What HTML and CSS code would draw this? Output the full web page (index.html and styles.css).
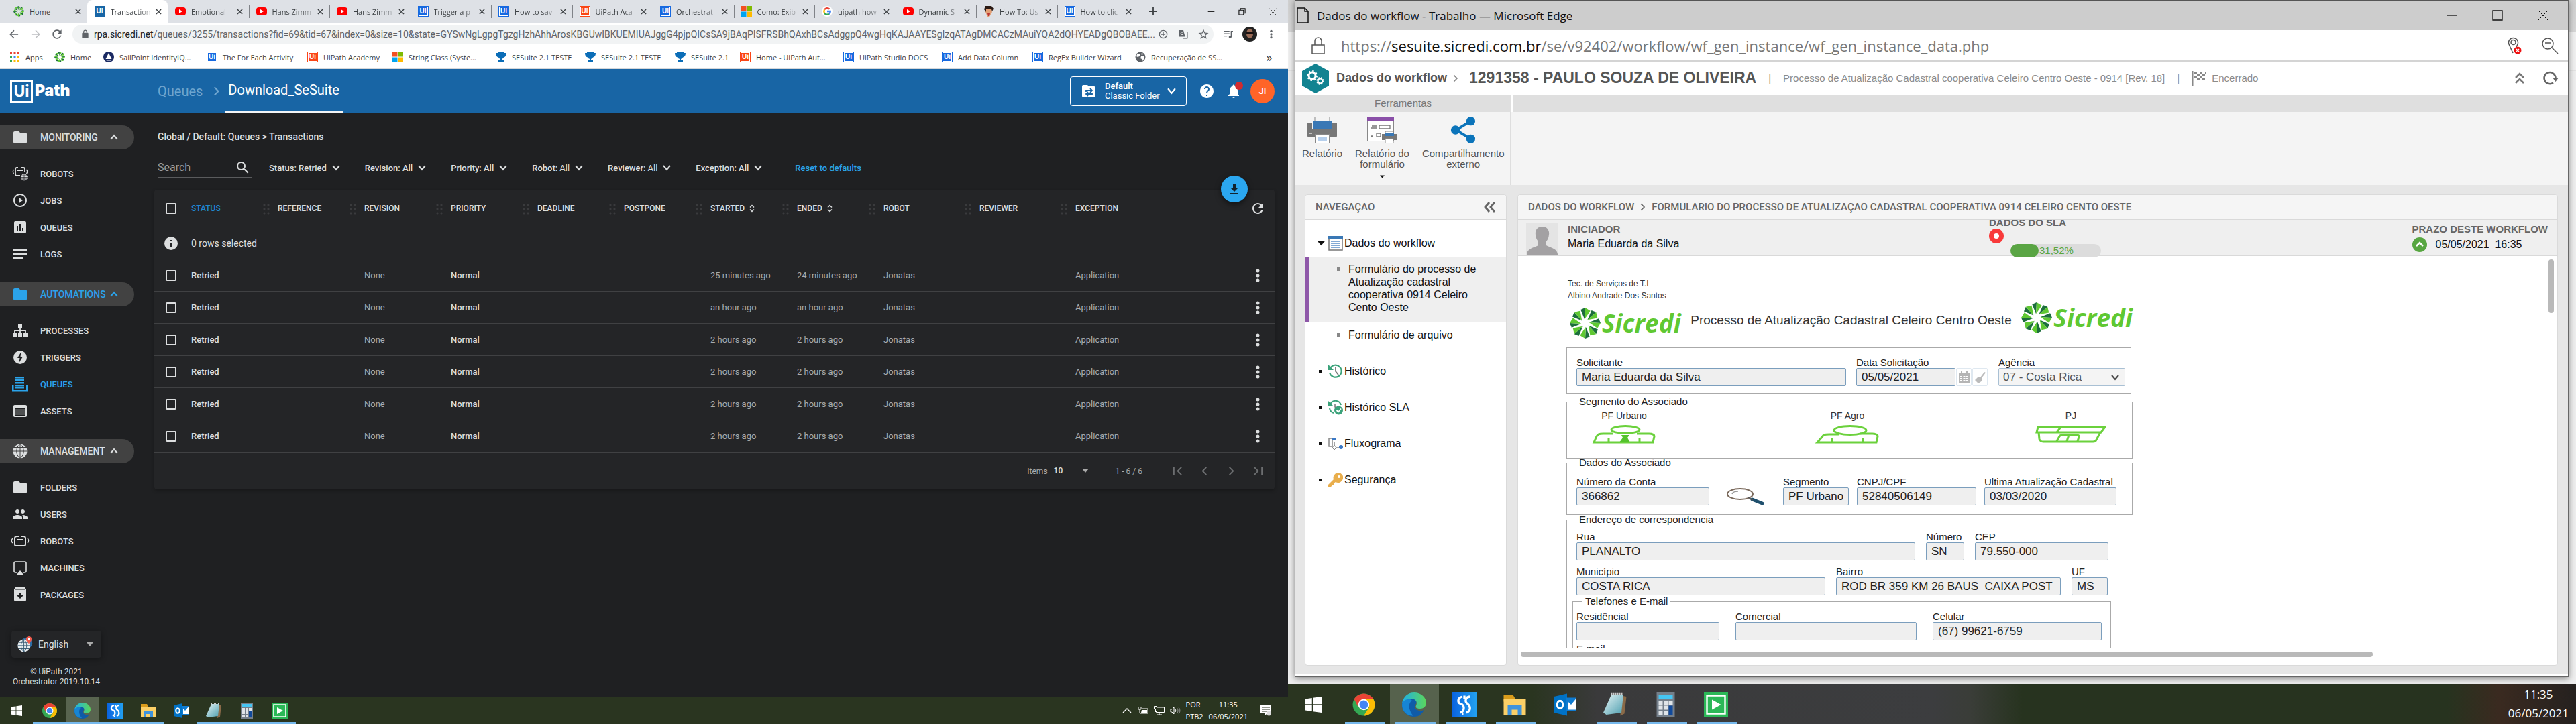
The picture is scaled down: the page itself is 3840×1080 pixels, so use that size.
FILE: index.html
```html
<!DOCTYPE html>
<html lang="pt-BR">
<head>
<meta charset="utf-8">
<title>Transactions</title>
<link rel="stylesheet" href="styles.css">
</head>
<body>
<svg class="sprite" aria-hidden="true">
  <defs>
    <linearGradient id="edgeG" x1="0" y1="0" x2="1" y2="0"><stop offset="0" stop-color="#1fb0e6"/><stop offset="1" stop-color="#5bd65b"/></linearGradient>
    <linearGradient id="sG" x1="0" y1="0" x2="1" y2="0"><stop offset="0" stop-color="#0a64e0"/><stop offset="1" stop-color="#22a0f0"/></linearGradient>
    <linearGradient id="noteG" x1="0" y1="0" x2="1" y2="1"><stop offset="0" stop-color="#e6f4f5"/><stop offset="1" stop-color="#4e9fb0"/></linearGradient>
  </defs>
  <symbol id="pin" viewBox="0 0 48 48">
    <g id="bl"><path fill="#1c6e3c" d="M23 18 17 3l7-3z"/><path fill="#5fc832" d="M23 18 24 0l8 5z"/></g>
    <use href="#bl" transform="rotate(45 24 24)"/><use href="#bl" transform="rotate(90 24 24)"/><use href="#bl" transform="rotate(135 24 24)"/><use href="#bl" transform="rotate(180 24 24)"/><use href="#bl" transform="rotate(225 24 24)"/><use href="#bl" transform="rotate(270 24 24)"/><use href="#bl" transform="rotate(315 24 24)"/>
  </symbol>
  <symbol id="yt" viewBox="0 0 16 16"><rect x="0" y="2" width="16" height="12" rx="4" fill="#f00"/><path fill="#fff" d="M6 5v6l5-3z"/></symbol>
  <symbol id="ms" viewBox="0 0 16 16"><path fill="#f25022" d="M0 0h7.500v7.500H0z"/><path fill="#7fba00" d="M8.500 0H16v7.500H8.500z"/><path fill="#00a4ef" d="M0 8.500h7.500V16H0z"/><path fill="#ffb900" d="M8.500 8.500H16V16H8.500z"/></symbol>
  <symbol id="goog" viewBox="0 0 16 16"><circle cx="8" cy="8" r="8" fill="#fff"/><g fill="none" stroke-width="2.400"><path stroke="#ea4335" d="M4 5.500A4.800 4.800 0 0 1 11.500 4.600"/><path stroke="#fbbc05" d="M4 5.500a5 5 0 0 0 0 5"/><path stroke="#34a853" d="M4 10.500a4.800 4.800 0 0 0 7 1.200"/><path stroke="#4285f4" d="M11 11.700A4.800 4.800 0 0 0 12.800 8H8"/></g></symbol>
  <symbol id="face" viewBox="0 0 16 16"><path fill="#e2a077" d="M3 3h9l1 6-4 7H6L3 9z"/><path fill="#2a1a14" d="M1 5 3 0h9l3 4-2 4-1-3H4v4z"/><path fill="#b33" d="M6 11h4l-1 4H7z"/></symbol>
  <symbol id="trophy" viewBox="0 0 16 16"><path fill="#0b6db7" d="M3 1h10v1h3c0 4-1.500 6-4 6.500C11 10 10 10.500 9 11v2h3v2H4v-2h3v-2c-1-.5-2-1-3-2.500C1.500 8 0 6 0 2h3z"/></symbol>
  <symbol id="sail" viewBox="0 0 16 16"><circle cx="8" cy="8" r="8" fill="#1b2a63"/><path fill="#fff" d="M8 2v9H3.500zM9 4l3.500 7H9zM3 12h10l-2 1.500H5z"/></symbol>
  <symbol id="globe" viewBox="0 0 24 24"><circle cx="12" cy="12" r="10.500" fill="currentColor"/><path fill="none" class="cut" stroke-width="1" d="M12 1v22M1 12h22M3 6.500h18M3 17.500h18M12 1.500c-7 5-7 16 0 21M12 1.500c7 5 7 16 0 21"/></symbol>
  <symbol id="world" viewBox="0 0 16 16"><circle cx="8" cy="8" r="7.500" fill="#5f6368"/><path fill="#fff" d="M3 4c2-1 4-1 5 0L6.500 7 4 8 2 7zM9 7h4l1 3-3 4-1-3-2-1zM10 2l2 1-1 2-2-1z"/></symbol>
  <symbol id="apps" viewBox="0 0 16 16"><path fill="#ea4335" d="M1 1h3v3H1zM6.500 1h3v3h-3zM12 1h3v3h-3z"/><path fill="#34a853" d="M1 6.500h3v3H1zM1 12h3v3H1z"/><path fill="#4285f4" d="M6.500 6.500h3v3h-3z"/><path fill="#fbbc05" d="M12 6.500h3v3h-3zM6.500 12h3v3h-3zM12 12h3v3h-3z"/></symbol>
  <symbol id="x" viewBox="0 0 10 10"><path fill="none" stroke="currentColor" stroke-width="1.600" d="m1 1 8 8M9 1 1 9"/></symbol>
  <symbol id="xthin" viewBox="0 0 16 16"><path fill="none" stroke="currentColor" d="m1 1 14 14M15 1 1 15"/></symbol>
  <symbol id="plus" viewBox="0 0 12 12"><path fill="none" stroke="currentColor" stroke-width="1.800" d="M6 0v12M0 6h12"/></symbol>
  <symbol id="min" viewBox="0 0 16 16"><path stroke="currentColor" stroke-width="1.300" d="M1 8h14"/></symbol>
  <symbol id="max" viewBox="0 0 16 16"><path fill="none" stroke="currentColor" stroke-width="1.300" d="M1 1h14v14H1z"/></symbol>
  <symbol id="restore" viewBox="0 0 12 12"><path fill="none" stroke="currentColor" stroke-width="1.200" d="M1 3.500h7.500V11H1zM3.500 3.500V1H11v7.500H8.500"/></symbol>
  <symbol id="back" viewBox="0 0 16 16"><path fill="none" stroke="currentColor" stroke-width="1.800" d="M15 8H2M8 1.500 1.500 8 8 14.500"/></symbol>
  <symbol id="fwd" viewBox="0 0 16 16"><path fill="none" stroke="currentColor" stroke-width="1.800" d="M1 8h13M8 1.500 14.500 8 8 14.500"/></symbol>
  <symbol id="refresh" viewBox="0 0 24 24"><path fill="currentColor" d="M17.650 6.350C16.200 4.900 14.210 4 12 4c-4.420 0-7.990 3.580-7.990 8s3.570 8 7.990 8c3.730 0 6.840-2.550 7.730-6h-2.080c-.82 2.330-3.040 4-5.650 4-3.310 0-6-2.690-6-6s2.690-6 6-6c1.660 0 3.140.69 4.220 1.780L13 11h7V4l-2.350 2.350z"/></symbol>
  <symbol id="lock" viewBox="0 0 24 24"><path fill="currentColor" d="M18 8h-1V6c0-2.760-2.240-5-5-5S7 3.240 7 6v2H6c-1.100 0-2 .9-2 2v10c0 1.100.9 2 2 2h12c1.100 0 2-.9 2-2V10c0-1.100-.9-2-2-2zM9 6c0-1.660 1.340-3 3-3s3 1.340 3 3v2H9V6z"/></symbol>
  <symbol id="pluscirc" viewBox="0 0 16 16"><circle cx="8" cy="8" r="6.500" fill="none" stroke="currentColor" stroke-width="1.500"/><path stroke="currentColor" stroke-width="1.500" d="M8 4.500v7M4.500 8h7"/></symbol>
  <symbol id="trans" viewBox="0 0 16 16"><path fill="currentColor" d="M1 1h7l3 11H2a1 1 0 0 1-1-1z"/><path fill="none" stroke="currentColor" d="M9 4h6v11H8"/><path fill="none" stroke="#fff" d="M7 5a2 2 0 1 0 0 3H5.500M10 7h4M12 7c0 2-1 3-2 4"/></symbol>
  <symbol id="star" viewBox="0 0 24 24"><path fill="currentColor" d="M22 9.240l-7.190-.62L12 2 9.190 8.630 2 9.240l5.460 4.730L5.820 21 12 17.270 18.180 21l-1.630-7.030L22 9.240zM12 15.400l-3.760 2.270 1-4.280-3.320-2.880 4.380-.38L12 6.100l1.710 4.040 4.380.38-3.320 2.880 1 4.280L12 15.400z"/></symbol>
  <symbol id="queuem" viewBox="0 0 16 16"><path fill="none" stroke="currentColor" stroke-width="1.600" d="M0 3h10M0 7h10M0 11h6M13 13V3h3"/><circle cx="11" cy="12.500" r="2.200" fill="currentColor"/></symbol>
  <symbol id="dots" viewBox="0 0 6 20"><circle cx="3" cy="3" r="2.500" fill="currentColor"/><circle cx="3" cy="10" r="2.500" fill="currentColor"/><circle cx="3" cy="17" r="2.500" fill="currentColor"/></symbol>
  <symbol id="cd" viewBox="0 0 12 12"><path fill="none" stroke="currentColor" stroke-width="2" d="m1 3 5 6 5-6"/></symbol>
  <symbol id="cu" viewBox="0 0 12 12"><path fill="none" stroke="currentColor" stroke-width="2" d="m1 9 5-6 5 6"/></symbol>
  <symbol id="cr" viewBox="0 0 12 16"><path fill="none" stroke="currentColor" stroke-width="2.500" d="m2 1 7 7-7 7"/></symbol>
  <symbol id="car" viewBox="0 0 10 6"><path fill="currentColor" d="M0 0h10L5 6z"/></symbol>
  <symbol id="folder" viewBox="0 0 24 24"><path fill="currentColor" d="M10 3H4C2.900 3 2 3.900 2 5v14c0 1.100.9 2 2 2h16c1.100 0 2-.9 2-2V7c0-1.100-.9-2-2-2h-8l-2-2z"/></symbol>
  <symbol id="fswap" viewBox="0 0 24 24"><path fill="#fff" d="M10 3H4C2.900 3 2 3.900 2 5v14c0 1.100.9 2 2 2h16c1.100 0 2-.9 2-2V7c0-1.100-.9-2-2-2h-8l-2-2z"/><path fill="none" stroke="#1865a5" stroke-width="1.800" d="M8 13v-2h8m-2-3 3 3-3 3M17 14v2H9m2-3-3 3 3 3"/></symbol>
  <symbol id="help" viewBox="0 0 24 24"><path fill="currentColor" d="M12 2C6.480 2 2 6.480 2 12s4.480 10 10 10 10-4.480 10-10S17.520 2 12 2zm1 17h-2v-2h2v2zm2.070-7.750l-.9.92C13.450 12.900 13 13.500 13 15h-2v-.5c0-1.100.45-2.100 1.170-2.830l1.240-1.260c.37-.36.59-.86.59-1.410 0-1.100-.9-2-2-2s-2 .9-2 2H8c0-2.210 1.790-4 4-4s4 1.790 4 4c0 .88-.36 1.680-.93 2.250z"/></symbol>
  <symbol id="bell" viewBox="0 0 24 24"><path fill="currentColor" d="M12 22c1.100 0 2-.9 2-2h-4c0 1.100.89 2 2 2zm6-6v-5c0-3.070-1.640-5.640-4.500-6.320V4c0-.83-.67-1.500-1.500-1.500s-1.500.67-1.500 1.500v.68C7.630 5.360 6 7.920 6 11v5l-2 2v1h16v-1l-2-2z"/></symbol>
  <symbol id="bot" viewBox="0 0 28 20"><g fill="none" stroke="currentColor" stroke-width="2"><path d="M11 3H9a3 3 0 0 0-3 3v9a2 2 0 0 0 2 2h12a2 2 0 0 0 2-2V6a3 3 0 0 0-3-3h-2M9.500 8h9M11 2v2M17 2v2"/><path d="M3 6c-2 2-2 5 0 7M25 6c2 2 2 5 0 7" stroke-width="1.500"/></g></symbol>
  <symbol id="botg" viewBox="0 0 24 24"><g fill="none" stroke="currentColor" stroke-width="1.800"><path d="M9 3H7a2 2 0 0 0-2 2v8a2 2 0 0 0 2 2h5M14 3h3a2 2 0 0 1 2 2v4M8 7h8"/><path d="M2.500 6c-1.500 2-1.500 4 0 6M21.500 6c1.500 2 1.500 4 0 6" stroke-width="1.300"/></g><circle cx="18" cy="17.500" r="5" fill="currentColor"/><path fill="none" stroke="#1f2022" stroke-width=".7" d="M18 12v11M13 17.500h10M14 15h8M14 20h8"/></symbol>
  <symbol id="jobs" viewBox="0 0 24 24"><path fill="currentColor" d="M10 16.500l6-4.500-6-4.500v9zM12 2C6.480 2 2 6.480 2 12s4.480 10 10 10 10-4.480 10-10S17.520 2 12 2zm0 18c-4.410 0-8-3.590-8-8s3.590-8 8-8 8 3.590 8 8-3.590 8-8 8z"/></symbol>
  <symbol id="assess" viewBox="0 0 24 24"><path fill="currentColor" d="M19 3H5c-1.100 0-2 .9-2 2v14c0 1.100.9 2 2 2h14c1.100 0 2-.9 2-2V5c0-1.100-.9-2-2-2zM9 17H7v-7h2v7zm4 0h-2V7h2v10zm4 0h-2v-4h2v4z"/></symbol>
  <symbol id="logs" viewBox="0 0 24 24"><path fill="currentColor" d="M2 5h20v2.500H2zM2 11h20v2.500H2zM2 17h14v2.500H2z"/></symbol>
  <symbol id="proc" viewBox="0 0 24 24"><path fill="currentColor" d="M9 2h6v6H9zM1 15h6v7H1zM9 15h6v7H9zM17 15h6v7h-6z"/><path fill="none" stroke="currentColor" stroke-width="1.800" d="M12 8v8M4 16v-4h16v4"/></symbol>
  <symbol id="trig" viewBox="0 0 24 24"><circle cx="12" cy="12" r="10" fill="currentColor"/><path fill="#1f2022" d="M13.500 4 8 13h3.500L10.500 20 16 11h-3.500z"/></symbol>
  <symbol id="queue" viewBox="0 0 24 24"><path fill="currentColor" d="M5 1h13v2.500H5zM5 5h13v2.500H5zM5 9h13v2.500H5zM5 13h13v2.500H5zM5 16.500h13v2H5zM0 13h2.500v8H21v-8h2.500v10.500H0z"/></symbol>
  <symbol id="assets" viewBox="0 0 24 24"><path fill="currentColor" d="M4 3h16a2 2 0 0 1 2 2v14a2 2 0 0 1-2 2H4a2 2 0 0 1-2-2V5a2 2 0 0 1 2-2zm0 5v11h16V8z"/><path stroke="currentColor" stroke-width="1.500" stroke-dasharray="2 1 11 9" d="M5 10.500h14M5 13.500h14M5 16.500h14"/></symbol>
  <symbol id="people" viewBox="0 0 24 24"><path fill="currentColor" d="M16 11c1.660 0 2.990-1.340 2.990-3S17.660 5 16 5c-1.660 0-3 1.340-3 3s1.340 3 3 3zm-8 0c1.660 0 2.990-1.340 2.990-3S9.660 5 8 5C6.340 5 5 6.340 5 8s1.340 3 3 3zm0 2c-2.330 0-7 1.170-7 3.500V19h14v-2.500c0-2.330-4.670-3.500-7-3.500zm8 0c-.29 0-.62.02-.97.05 1.160.84 1.970 1.970 1.970 3.450V19h6v-2.500c0-2.330-4.670-3.500-7-3.500z"/></symbol>
  <symbol id="mach" viewBox="0 0 24 24"><path fill="none" stroke="currentColor" stroke-width="1.600" d="M8 19H5a2 2 0 0 1-2-2V5a2 2 0 0 1 2-2h14a2 2 0 0 1 2 2v12a2 2 0 0 1-2 2h-3"/><path fill="currentColor" d="M6 23h12l-6-7z"/></symbol>
  <symbol id="pack" viewBox="0 0 24 24"><path fill="currentColor" d="M5 1h14l2 3v16a2 2 0 0 1-2 2H5a2 2 0 0 1-2-2V4zm0 2-.5 1.500h15L19 3zm5.500 7v3H7l5 5 5-5h-3.500v-3z"/></symbol>
  <symbol id="lang" viewBox="0 0 24 28"><circle cx="15" cy="12" r="9" fill="#2d6da5"/><circle cx="10.500" cy="16" r="10" fill="#e6ecef"/><path fill="none" stroke="#33566f" stroke-width="1" d="M10.500 6v20M.5 16h20M2 11h17M2 21h17M10.500 6c-6 5-6 15 0 20M10.500 6c6 5 6 15 0 20"/><path fill="#ee5a4c" d="M18.500 1a4.500 4.500 0 0 1 4.500 5c0 3-4.500 7-4.500 7S14 9 14 6a4.500 4.500 0 0 1 4.500-5z"/><circle cx="18.500" cy="5.500" r="2" fill="#fff"/></symbol>
  <symbol id="search" viewBox="3 3 18 18"><path fill="currentColor" d="M15.500 14h-.79l-.28-.27C15.410 12.590 16 11.110 16 9.500 16 5.910 13.090 3 9.500 3S3 5.910 3 9.500 5.910 16 9.500 16c1.610 0 3.090-.59 4.230-1.570l.27.28v.79l5 4.990L20.490 19l-4.990-5zm-6 0C7.010 14 5 11.990 5 9.500S7.010 5 9.500 5 14 7.010 14 9.500 11.990 14 9.500 14z"/></symbol>
  <symbol id="info" viewBox="0 0 20 20"><circle cx="10" cy="10" r="10" fill="currentColor"/><path fill="#242527" d="M9 5h2v2H9zM9 9h2v6H9z"/></symbol>
  <symbol id="sort" viewBox="0 0 8 12"><path fill="none" stroke="currentColor" stroke-width="1.500" d="m1 4.500 3-3 3 3M1 7.500l3 3 3-3"/></symbol>
  <symbol id="dl" viewBox="0 0 16 18"><path fill="#12232e" d="M6 1h4v6h4l-6 6-6-6h4zM2 15h12v2H2z"/></symbol>
  <symbol id="pfirst" viewBox="0 0 16 16"><path fill="none" stroke="currentColor" stroke-width="2" d="M2 2v12M14 2 8 8l6 6"/></symbol>
  <symbol id="pprev" viewBox="0 0 16 16"><path fill="none" stroke="currentColor" stroke-width="2" d="M11 2 5 8l6 6"/></symbol>
  <symbol id="pnext" viewBox="0 0 16 16"><path fill="none" stroke="currentColor" stroke-width="2" d="m5 2 6 6-6 6"/></symbol>
  <symbol id="plast" viewBox="0 0 16 16"><path fill="none" stroke="currentColor" stroke-width="2" d="M14 2v12M2 2l6 6-6 6"/></symbol>
  <symbol id="win" viewBox="0 0 16 16"><path fill="#fff" d="M0 2.300 6.500 1.400v6.100H0zM7.400 1.200 16 0v7.500H7.400zM0 8.500h6.500v6.100L0 13.700zM7.400 8.500H16V16l-8.600-1.200z"/></symbol>
  <symbol id="chrome" viewBox="0 0 24 24"><circle cx="12" cy="12" r="11" fill="#34a853"/><path fill="#ea4335" d="M2.500 6.500A11 11 0 0 1 21.500 6.500H12l-5.500 8z"/><path fill="#fbbc05" d="M21.500 6.500A11 11 0 0 1 12 23l5.500-8.500L12 6.500z"/><circle cx="12" cy="12" r="5.500" fill="#fff"/><circle cx="12" cy="12" r="4.300" fill="#4285f4"/></symbol>
  <symbol id="edge" viewBox="0 0 24 24"><path fill="#0f5ba8" d="M0 12c0-6 5-9 9-8 5 1 6 5 5 7-2 2-2 6 3 7 2 .4 4 0 5-1-2 5-6 7-10 7C5 24 0 19 0 12z"/><path fill="#1785d3" d="M0 12C1 6 7 5 10 8c-4 2-4 9 1 15C4 23 0 18 0 12z"/><path fill="url(#edgeG)" d="M0 11C1 4 6 0 12 0c7 0 12 5 12 10 0 4-3 6-6 6-3 0-5-1-4-3 2-4-1-7-5-7-4 0-8 2-9 5z"/></symbol>
  <symbol id="ss" viewBox="0 0 24 24"><path fill="url(#sG)" d="M0 0h24v24H0z"/><path fill="none" stroke="#fff" stroke-width="2.200" d="M10 4C5 5 5 10 8 11c4 1 5 7 0 9M18 4c-5 0-6 5-3 7s4 7-1 9M12 3v3M10 21h1"/></symbol>
  <symbol id="expl" viewBox="0 0 24 24"><path fill="#d99c1c" d="M1 2h9l2 3v4H1z"/><path fill="#fbd067" d="M1 6h22v16H1z"/><path fill="#3f93dd" d="M5 12h14v10h-4v-5H9v5H5z"/></symbol>
  <symbol id="outl" viewBox="0 0 24 24"><path fill="#0072c6" d="M1 4 14 1v22L1 20z"/><path fill="#0f7bd0" d="M13 5h10v13H13z"/><path fill="#fff" d="m15 9 3 3 5-6v11h-8z"/><ellipse cx="7" cy="12" rx="2.800" ry="3.800" fill="none" stroke="#fff" stroke-width="2"/></symbol>
  <symbol id="note" viewBox="0 0 24 24"><path fill="#8a6a48" d="m18 3 5 1-2 17-4 2z"/><path fill="url(#noteG)" d="M8 2h12l-2 18-15 2-3-2z"/><path stroke="#ccc" stroke-width="2" stroke-dasharray="1 1" d="M8 1.500h12"/></symbol>
  <symbol id="calc" viewBox="0 0 24 24"><path fill="#747f8a" d="M3 0h18v24H3z"/><path fill="#45c6f3" d="M5 2h14v4H5z"/><path fill="#dfe4e8" d="M5 8h4v4H5zM10 8h4v4h-4zM15 8h4v4h-4zM5 13h4v4H5zM10 13h4v4h-4zM5 18h4v4H5zM10 18h4v4h-4z"/><path fill="#114a9c" d="M15 13h4v9h-4z"/></symbol>
  <symbol id="play" viewBox="0 0 24 24"><path fill="#2bb857" d="M0 0h24v24H0z"/><path fill="none" stroke="#fff" stroke-width="1.600" d="M3 3h18v18H3z"/><path fill="#fff" d="m8 7 9 5-9 5z"/></symbol>
  <symbol id="tup" viewBox="0 0 14 14"><path fill="none" stroke="#fff" stroke-width="1.300" d="m1 10 6-6 6 6"/></symbol>
  <symbol id="bat" viewBox="0 0 16 12"><path fill="none" stroke="#fff" d="M6 3h9v7H3V8M1 1v3h4V1M3 4v4"/><path fill="#fff" d="M6 5h8v4H5z"/></symbol>
  <symbol id="net" viewBox="0 0 16 14"><path fill="none" stroke="#fff" d="M5 2h10.500v7.500H3.500V7M8 10v3M5 13h7M.5.500h4v4h-4zM2.500 4.500V9"/></symbol>
  <symbol id="snd" viewBox="0 0 16 12"><path fill="none" stroke="#fff" d="M1 4h2l3-3v10L3 8H1zM8 4c1 1 1 3 0 4"/><path fill="none" stroke="#999" d="M10.500 2c2 2 2 6 0 8M13 1c2.500 3 2.500 7 0 10"/></symbol>
  <symbol id="notif" viewBox="0 0 16 16"><path fill="#fff" d="M0 0h16v12h-6l-3 3v-3H0z"/><path stroke="#2a3520" d="M2 3h12M2 6h12M2 9h7"/><circle cx="12.500" cy="12" r="3.500" fill="#ddd"/></symbol>
  <symbol id="page" viewBox="0 0 18 24"><path fill="none" stroke="#111" stroke-width="1.500" d="M1 1h11l5 5v17H1zM12 1v5h5"/></symbol>
  <symbol id="lockt" viewBox="0 0 20 26"><path fill="none" stroke="#555" stroke-width="1.500" d="M1 12h18v13H1zM5 12V6a5 5 0 0 1 10 0v6"/></symbol>
  <symbol id="loc" viewBox="0 0 22 26"><path fill="none" stroke="#555" stroke-width="1.500" d="M8 24 2 11a7 7 0 1 1 13 0l-2 4"/><circle cx="8.500" cy="8" r="3.500" fill="none" stroke="#555" stroke-width="1.500"/><circle cx="15" cy="20" r="5.500" fill="#e11"/><path stroke="#fff" stroke-width="1.500" d="m13 18 4 4M17 18l-4 4"/></symbol>
  <symbol id="zout" viewBox="0 0 26 26"><circle cx="10" cy="10" r="8" fill="none" stroke="#555" stroke-width="1.500"/><path stroke="#555" stroke-width="1.500" d="M6 9h8M16 16l9 9"/></symbol>
  <symbol id="hex" viewBox="0 0 40 44"><path fill="#128391" d="M20 0 40 11v22L20 44 0 33V11z"/><g fill="none" stroke="#fff"><circle cx="15" cy="18" r="5" stroke-width="3"/><circle cx="15" cy="18" r="7" stroke-width="2" stroke-dasharray="2.500 3"/><circle cx="27" cy="26" r="3.500" stroke-width="2.200"/><circle cx="27" cy="26" r="5" stroke-width="1.500" stroke-dasharray="2 2"/></g></symbol>
  <symbol id="flag" viewBox="0 0 22 22"><path fill="#888" d="M1 0h1.500v22H1zM4 1h4v3H4zM12 1h4v3h-4zM8 4h4v3H8zM16 4h4v3h-4zM4 7h4v3H4zM12 7h4v3h-4zM8 10h4v3H8zM16 10h4v3h-4zM20 1h1v3h-1z"/></symbol>
  <symbol id="uu" viewBox="0 0 14 18"><path fill="none" stroke="#777" stroke-width="2.500" d="m1 8 6-6 6 6M1 16l6-6 6 6"/></symbol>
  <symbol id="ll" viewBox="0 0 18 16"><path fill="none" stroke="#666" stroke-width="2.800" d="M8 1 2 8l6 7M16 1l-6 7 6 7"/></symbol>
  <symbol id="rel" viewBox="0 0 24 22"><path fill="none" stroke="#666" stroke-width="2.500" d="M16 17.500A8.500 8.500 0 1 1 19.500 11"/><path fill="#666" d="M15 10h9l-4.500 6z"/></symbol>
  <symbol id="printer" viewBox="0 0 44 40"><path fill="#f4f4f4" stroke="#888" d="M11 .5h22V14H11z"/><path fill="#777" d="M0 9h7v10h30V9h7v20a2 2 0 0 1-2 2H2a2 2 0 0 1-2-2z"/><path fill="#3a78b5" d="M8 7h28v12H8z"/><path fill="#fff" stroke="#888" d="M11.500 26.500h21v13h-21z"/><path stroke="#9fc0e6" stroke-width="1.500" d="M16 32h13M16 35h13"/><path stroke="#ddd" stroke-width="1.500" d="M3 25h4"/></symbol>
  <symbol id="formp" viewBox="0 0 44 40"><path fill="#fff" stroke="#888" d="M.5.500h39v36H.5z"/><path fill="#8a4fa8" d="M0 0h40v7H0z"/><path fill="none" stroke="#777" stroke-width="1.300" d="M18 13h16v5H18zM7 14h8M5 17h10M5 27l2 3 2-3M14 25h6v5h-6z"/><path fill="#777" d="M22 26h22v9H22z"/><path fill="#fff" stroke="#888" d="M27 22h12v5H27zM27 33h12v7H27z"/><path fill="#3a78b5" d="M26 25h14v4H26z"/></symbol>
  <symbol id="share" viewBox="0 0 38 42"><path stroke="#0b74ba" stroke-width="4" fill="none" d="M31 7 8 21l23 14"/><circle cx="31" cy="7" r="7" fill="#0b74ba"/><circle cx="7" cy="21" r="7" fill="#0b74ba"/><circle cx="31" cy="35" r="7" fill="#0b74ba"/></symbol>
  <symbol id="tdoc" viewBox="0 0 22 22"><path fill="#fff" stroke="#777" stroke-width="1.500" d="M1 1h20v20H1z"/><path fill="#3a78b5" d="M0 0h22v4H0z"/><path stroke="#5b8fc7" stroke-width="1.500" d="M4 8h14M4 11h14M4 14h14M4 17h14"/></symbol>
  <symbol id="hist" viewBox="0 0 22 22"><path fill="none" stroke="#3ba27a" stroke-width="2.200" d="M3 6A9 9 0 1 1 2 13"/><path fill="#3ba27a" d="M0 1v8h8z"/><path fill="none" stroke="#777" stroke-width="1.800" d="M11 5v6l4 5"/></symbol>
  <symbol id="hsla" viewBox="0 0 22 22"><path fill="none" stroke="#3ba27a" stroke-width="2" d="M3 6a8.500 8.500 0 0 1 16 1M2 12a9 9 0 0 0 6 7"/><path fill="#3ba27a" d="M0 1v7h7z"/><path fill="none" stroke="#777" stroke-width="1.500" d="M10 5v5l2 1"/><circle cx="15.500" cy="15" r="6.500" fill="#3ba27a"/><path fill="none" stroke="#fff" stroke-width="1.800" d="m12.500 15 2.500 2.500 4-5"/></symbol>
  <symbol id="flux" viewBox="0 0 22 20"><path fill="none" stroke="#888" stroke-width="1.500" d="M1 2h5v12H1zM6 2h4M9 8v8h10"/><path fill="#3a78c5" d="M6 1h6v4H6z"/><circle cx="19" cy="15" r="3" fill="#3a78c5"/><path fill="#fff" stroke="#888" d="m9 12 3 4-3 3-3-3z"/></symbol>
  <symbol id="key" viewBox="0 0 22 22"><path fill="#e9ae4c" d="M14.500 0A7.500 7.500 0 1 1 11 14l-3 2v2H5v2l-2 2H0v-4l8-8A7.500 7.500 0 0 1 14.500 0z"/><circle cx="16" cy="6" r="2" fill="#fff"/></symbol>
  <symbol id="person" viewBox="0 0 48 48"><path fill="#e4e4e4" d="M0 0h48v48H0z"/><path fill="#a3a1a3" d="M24 6c7 0 11 5 10 12-.5 5-2 8-4 10v6c4 3 16 4 17 13v1H1v-1c1-9 13-10 17-13v-6c-2-2-3.500-5-4-10C13 11 17 6 24 6z"/></symbol>
  <symbol id="calen" viewBox="0 0 18 18"><path fill="#b5b5b5" d="M1 3h16v14H1z"/><path stroke="#b5b5b5" stroke-width="2" d="M5 0v4M13 0v4"/><path fill="#fff" d="M3 7h3v2H3zM7.500 7h3v2h-3zM12 7h3v2h-3zM3 10h3v2H3zM7.500 10h3v2h-3zM12 10h3v2h-3zM3 13h3v2H3zM7.500 13h3v2h-3zM12 13h3v2h-3z"/></symbol>
  <symbol id="broom" viewBox="0 0 18 18"><path fill="#bbb" d="m15 1 2 1-6 8 1 4-6 4-5-5 5-5 3 1z"/></symbol>
  <symbol id="urb" viewBox="0 0 94 28"><g fill="none" stroke="#6bd13c" stroke-width="3"><ellipse cx="49" cy="7" rx="21" ry="5.500"/><path d="M31 13H16C9 13 8 14 6 17L2 26h88l2-9c0-2-2-4-8-4H66M24 20v6M70 20v6"/></g><path fill="#54c32d" d="M43 15h12l-3 4 4 7H40l5-7z"/></symbol>
  <symbol id="agro" viewBox="0 0 94 28"><g fill="none" stroke="#6bd13c" stroke-width="3"><ellipse cx="51" cy="8" rx="24" ry="6.500"/><path d="M35 14H20C12 14 11 15 9 18L2 26h88l2-9c0-2-2-4-8-4H66M24 20v6M70 20v6"/></g></symbol>
  <symbol id="pj" viewBox="0 0 106 26"><path fill="none" stroke="#6bd13c" stroke-width="3" d="M4 2h100l-6 8H2zM38 2l-6 8M5 10l1 10q1 4 6 4h74q4 0 5-3l6-11M32 23l4-7q1-2 5-2h20q5 0 4 3l-2 6M50 14l-3 9"/></symbol>
  <symbol id="mag" viewBox="0 0 60 26"><ellipse cx="21" cy="9" rx="19" ry="8" fill="#fff" stroke="#7b6a5c" stroke-width="2"/><path fill="none" stroke="#999" stroke-width="1.500" d="M9 9c1-3 5-4 9-4"/><path stroke="#1f4f6d" stroke-width="5" stroke-linecap="round" d="m39 17 15 6"/><path stroke="#555" stroke-width="2" d="m33 14 7 4"/></symbol>
</svg>

<main class="desk">
  <section class="screen left">
    <div class="tabs">
      <div class="tablist">
        <div class="tab"><svg class="f"><use href="#pin"/></svg><span>Home</span><svg class="close"><use href="#x"/></svg></div>
        <div class="tab on"><i class="ui dk">Ui</i><span>Transaction</span><svg class="close"><use href="#x"/></svg></div>
        <div class="tab"><svg class="f"><use href="#yt"/></svg><span>Emotional</span><svg class="close"><use href="#x"/></svg></div>
        <div class="tab sep"><svg class="f"><use href="#yt"/></svg><span>Hans Zimm</span><svg class="close"><use href="#x"/></svg></div>
        <div class="tab sep"><svg class="f"><use href="#yt"/></svg><span>Hans Zimm</span><svg class="close"><use href="#x"/></svg></div>
        <div class="tab sep"><i class="ui">Ui</i><span>Trigger a p</span><svg class="close"><use href="#x"/></svg></div>
        <div class="tab sep"><i class="ui">Ui</i><span>How to sav</span><svg class="close"><use href="#x"/></svg></div>
        <div class="tab sep"><i class="ui or">Ui</i><span>UiPath Aca</span><svg class="close"><use href="#x"/></svg></div>
        <div class="tab sep"><i class="ui">Ui</i><span>Orchestrat</span><svg class="close"><use href="#x"/></svg></div>
        <div class="tab sep"><svg class="f"><use href="#ms"/></svg><span>Como: Exib</span><svg class="close"><use href="#x"/></svg></div>
        <div class="tab sep"><svg class="f"><use href="#goog"/></svg><span>uipath how</span><svg class="close"><use href="#x"/></svg></div>
        <div class="tab sep"><svg class="f"><use href="#yt"/></svg><span>Dynamic S</span><svg class="close"><use href="#x"/></svg></div>
        <div class="tab sep"><svg class="f"><use href="#face"/></svg><span>How To: Us</span><svg class="close"><use href="#x"/></svg></div>
        <div class="tab sep last"><i class="ui">Ui</i><span>How to clic</span><svg class="close"><use href="#x"/></svg></div>
      </div>
      <button class="newtab" aria-label="Nova guia"><svg><use href="#plus"/></svg></button>
      <div class="winbtns"><button aria-label="Minimizar"><svg><use href="#min"/></svg></button><button aria-label="Restaurar"><svg><use href="#restore"/></svg></button><button aria-label="Fechar"><svg><use href="#xthin"/></svg></button></div>
    </div>
    <div class="addr">
      <button aria-label="Voltar"><svg><use href="#back"/></svg></button>
      <button class="fwd" aria-label="Avançar"><svg><use href="#fwd"/></svg></button>
      <button aria-label="Recarregar"><svg class="rl"><use href="#refresh"/></svg></button>
      <div class="omni">
        <svg class="lk"><use href="#lock"/></svg>
        <div class="url"><b>rpa.sicredi.net</b>/queues/3255/transactions?fid=69&amp;tid=67&amp;index=0&amp;size=10&amp;state=GYSwNgLgpgTgzgHzhAhhArosKBGUwIBKUEMIUAJggG4pjpQICsSA9jBAqPISFRSBhQAxhBCsAdggpQ4wgHqKAJAAYESgIzqATAgDMCACzMAuiYQA2dQHYEADgQBOBAEE...</div>
        <button aria-label="Instalar"><svg><use href="#pluscirc"/></svg></button><button aria-label="Traduzir"><svg><use href="#trans"/></svg></button><button aria-label="Favorito"><svg class="st"><use href="#star"/></svg></button>
      </div>
      <button aria-label="Mídia"><svg><use href="#queuem"/></svg></button>
      <svg class="ava" viewBox="0 0 22 22"><circle cx="11" cy="11" r="11" fill="#222"/><ellipse cx="11" cy="10" rx="5" ry="7" fill="#9a6b56"/><path fill="#1a1212" d="M5 7h12v3H5z"/></svg>
      <button aria-label="Menu"><svg class="dt"><use href="#dots"/></svg></button>
    </div>
    <nav class="marks">
      <a href="#"><svg><use href="#apps"/></svg>Apps</a>
      <a href="#"><svg><use href="#pin"/></svg>Home</a>
      <a href="#"><svg><use href="#sail"/></svg>SailPoint IdentityIQ...</a>
      <a href="#"><i class="ui">Ui</i>The For Each Activity</a>
      <a href="#"><i class="ui or">Ui</i>UiPath Academy</a>
      <a href="#"><svg><use href="#ms"/></svg>String Class (Syste...</a>
      <a href="#"><svg><use href="#trophy"/></svg>SESuite 2.1 TESTE</a>
      <a href="#"><svg><use href="#trophy"/></svg>SESuite 2.1 TESTE</a>
      <a href="#"><svg><use href="#trophy"/></svg>SESuite 2.1</a>
      <a href="#"><i class="ui or">Ui</i>Home - UiPath Aut...</a>
      <a href="#"><i class="ui">Ui</i>UiPath Studio DOCS</a>
      <a href="#"><i class="ui">Ui</i>Add Data Column</a>
      <a href="#"><i class="ui">Ui</i>RegEx Builder Wizard</a>
      <a href="#"><svg><use href="#world"/></svg>Recuperação de SS...</a>
      <button class="more" aria-label="Mais favoritos">»</button>
    </nav>
    <header class="top">
      <div class="logo"><i>Ui</i><b>Path</b></div>
      <a class="q" href="#">Queues</a><svg class="sepr"><use href="#cr"/></svg><a class="cur" href="#">Download_SeSuite</a>
      <button class="fold"><svg class="fi"><use href="#fswap"/></svg><span><b>Default</b>Classic Folder</span><svg class="c"><use href="#cd"/></svg></button>
      <button class="ib" aria-label="Ajuda"><svg><use href="#help"/></svg></button>
      <button class="ib bell" aria-label="Notificações"><svg><use href="#bell"/></svg></button>
      <button class="me">JI</button>
    </header>
    <div class="app">
      <aside class="side">
        <a class="grp" href="#"><svg><use href="#folder"/></svg>MONITORING<svg class="c"><use href="#cu"/></svg></a>
        <a class="it" href="#"><svg><use href="#botg"/></svg>ROBOTS</a>
        <a class="it" href="#"><svg><use href="#jobs"/></svg>JOBS</a>
        <a class="it" href="#"><svg><use href="#assess"/></svg>QUEUES</a>
        <a class="it" href="#"><svg><use href="#logs"/></svg>LOGS</a>
        <a class="grp blue" href="#"><svg><use href="#folder"/></svg>AUTOMATIONS<svg class="c"><use href="#cu"/></svg></a>
        <a class="it" href="#"><svg><use href="#proc"/></svg>PROCESSES</a>
        <a class="it" href="#"><svg><use href="#trig"/></svg>TRIGGERS</a>
        <a class="it blue" href="#"><svg><use href="#queue"/></svg>QUEUES</a>
        <a class="it" href="#"><svg><use href="#assets"/></svg>ASSETS</a>
        <a class="grp" href="#"><svg><use href="#globe"/></svg>MANAGEMENT<svg class="c"><use href="#cu"/></svg></a>
        <a class="it" href="#"><svg><use href="#folder"/></svg>FOLDERS</a>
        <a class="it" href="#"><svg><use href="#people"/></svg>USERS</a>
        <a class="it" href="#"><svg class="wide"><use href="#bot"/></svg>ROBOTS</a>
        <a class="it" href="#"><svg><use href="#mach"/></svg>MACHINES</a>
        <a class="it" href="#"><svg><use href="#pack"/></svg>PACKAGES</a>
        <div class="lang"><svg class="lg"><use href="#lang"/></svg><select aria-label="Language"><option>English</option></select><svg class="car"><use href="#car"/></svg></div>
        <p class="ver">© UiPath 2021<br>Orchestrator 2019.10.14</p>
      </aside>
      <div class="main">
        <h1>Global / Default: Queues &gt; Transactions</h1>
        <div class="filters">
          <div class="find"><input type="text" placeholder="Search" aria-label="Search"><svg><use href="#search"/></svg></div>
          <button>Status: Retried<svg><use href="#cd"/></svg></button>
          <button>Revision: All<svg><use href="#cd"/></svg></button>
          <button>Priority: All<svg><use href="#cd"/></svg></button>
          <button>Robot: <span>All</span><svg><use href="#cd"/></svg></button>
          <button>Reviewer: <span>All</span><svg><use href="#cd"/></svg></button>
          <button>Exception: All<svg><use href="#cd"/></svg></button>
          <button class="reset">Reset to defaults</button>
        </div>
        <div class="card">
          <button class="fab" aria-label="Download"><svg><use href="#dl"/></svg></button>
          <table>
            <colgroup><col class="c0"><col class="c1"><col class="c1"><col class="c1"><col class="c1"><col class="c1"><col class="c1"><col class="c1"><col class="c1"><col class="c2"><col class="c2"><col><col class="c3"></colgroup>
            <thead>
              <tr><th><input type="checkbox" aria-label="Select all"></th><th class="blue nog">STATUS</th><th>REFERENCE</th><th>REVISION</th><th>PRIORITY</th><th>DEADLINE</th><th>POSTPONE</th><th>STARTED <svg class="so"><use href="#sort"/></svg></th><th>ENDED <svg class="so"><use href="#sort"/></svg></th><th>ROBOT</th><th>REVIEWER</th><th>EXCEPTION</th><th class="nog"><button aria-label="Refresh"><svg class="rf"><use href="#refresh"/></svg></button></th></tr>
            </thead>
            <tbody>
              <tr class="selrow"><td><svg class="inf"><use href="#info"/></svg></td><td colspan="12">0 rows selected</td></tr>
              <tr><td><input type="checkbox" aria-label="Select"></td><td class="s">Retried</td><td></td><td>None</td><td class="s">Normal</td><td></td><td></td><td>25 minutes ago</td><td>24 minutes ago</td><td>Jonatas</td><td></td><td>Application</td><td><button aria-label="More"><svg class="kb"><use href="#dots"/></svg></button></td></tr>
              <tr><td><input type="checkbox" aria-label="Select"></td><td class="s">Retried</td><td></td><td>None</td><td class="s">Normal</td><td></td><td></td><td>an hour ago</td><td>an hour ago</td><td>Jonatas</td><td></td><td>Application</td><td><button aria-label="More"><svg class="kb"><use href="#dots"/></svg></button></td></tr>
              <tr><td><input type="checkbox" aria-label="Select"></td><td class="s">Retried</td><td></td><td>None</td><td class="s">Normal</td><td></td><td></td><td>2 hours ago</td><td>2 hours ago</td><td>Jonatas</td><td></td><td>Application</td><td><button aria-label="More"><svg class="kb"><use href="#dots"/></svg></button></td></tr>
              <tr><td><input type="checkbox" aria-label="Select"></td><td class="s">Retried</td><td></td><td>None</td><td class="s">Normal</td><td></td><td></td><td>2 hours ago</td><td>2 hours ago</td><td>Jonatas</td><td></td><td>Application</td><td><button aria-label="More"><svg class="kb"><use href="#dots"/></svg></button></td></tr>
              <tr><td><input type="checkbox" aria-label="Select"></td><td class="s">Retried</td><td></td><td>None</td><td class="s">Normal</td><td></td><td></td><td>2 hours ago</td><td>2 hours ago</td><td>Jonatas</td><td></td><td>Application</td><td><button aria-label="More"><svg class="kb"><use href="#dots"/></svg></button></td></tr>
              <tr><td><input type="checkbox" aria-label="Select"></td><td class="s">Retried</td><td></td><td>None</td><td class="s">Normal</td><td></td><td></td><td>2 hours ago</td><td>2 hours ago</td><td>Jonatas</td><td></td><td>Application</td><td><button aria-label="More"><svg class="kb"><use href="#dots"/></svg></button></td></tr>
            </tbody>
          </table>
          <div class="pager">
            <label for="size">Items</label>
            <div class="size"><select id="size"><option>10</option></select><svg class="car"><use href="#car"/></svg></div>
            <span class="cnt">1 - 6 / 6</span>
            <button aria-label="First"><svg><use href="#pfirst"/></svg></button><button aria-label="Previous"><svg><use href="#pprev"/></svg></button><button aria-label="Next"><svg><use href="#pnext"/></svg></button><button aria-label="Last"><svg><use href="#plast"/></svg></button>
          </div>
        </div>
      </div>
    </div>
    <footer class="task">
      <button class="idle" aria-label="Iniciar"><svg class="w"><use href="#win"/></svg></button>
      <button aria-label="Chrome"><svg><use href="#chrome"/></svg></button>
      <button class="act" aria-label="Edge"><svg><use href="#edge"/></svg></button>
      <button aria-label="SeSuite"><svg><use href="#ss"/></svg></button>
      <button aria-label="Explorador"><svg><use href="#expl"/></svg></button>
      <button class="idle" aria-label="Outlook"><svg><use href="#outl"/></svg></button>
      <button aria-label="Bloco de notas"><svg><use href="#note"/></svg></button>
      <button aria-label="Calculadora"><svg><use href="#calc"/></svg></button>
      <button aria-label="Player"><svg><use href="#play"/></svg></button>
      <div class="tray"><svg><use href="#tup"/></svg><svg><use href="#bat"/></svg><svg><use href="#net"/></svg><svg><use href="#snd"/></svg><span>POR<br>PTB2</span><time>11:35<br>06/05/2021</time><svg class="nt"><use href="#notif"/></svg></div>
    </footer>
  </section>

  <section class="screen right">
    <div class="back">
      <div class="edge">
        <div class="etitle"><svg class="pg"><use href="#page"/></svg><span>Dados do workflow - Trabalho — Microsoft Edge</span><button aria-label="Minimizar"><svg><use href="#min"/></svg></button><button aria-label="Maximizar"><svg><use href="#max"/></svg></button><button aria-label="Fechar"><svg><use href="#xthin"/></svg></button></div>
        <div class="eurl"><svg class="lk"><use href="#lockt"/></svg><span>https://<b>sesuite.sicredi.com.br</b>/se/v92402/workflow/wf_gen_instance/wf_gen_instance_data.php</span><button aria-label="Localização"><svg class="lo"><use href="#loc"/></svg></button><button aria-label="Reduzir zoom"><svg><use href="#zout"/></svg></button></div>
        <header class="ehead"><svg class="hx"><use href="#hex"/></svg><b class="dw">Dados do workflow</b><svg class="cc"><use href="#cr"/></svg><h2>1291358 - PAULO SOUZA DE OLIVEIRA</h2><span class="bar">|</span><span class="pr">Processo de Atualização Cadastral cooperativa Celeiro Centro Oeste - 0914 [Rev. 18]</span><span class="bar">|</span><svg class="fl"><use href="#flag"/></svg><span>Encerrado</span><button aria-label="Recolher"><svg class="up"><use href="#uu"/></svg></button><button aria-label="Atualizar"><svg class="re"><use href="#rel"/></svg></button></header>
        <div class="ribbon"><div class="rcap">Ferramentas</div><div class="rfill"></div></div>
        <div class="tools">
          <button><svg><use href="#printer"/></svg>Relatório</button>
          <button><svg><use href="#formp"/></svg>Relatório do<br>formulário<svg class="car"><use href="#car"/></svg></button>
          <button><svg><use href="#share"/></svg>Compartilhamento<br>externo</button>
        </div>
        <div class="work">
          <nav class="panel navp">
            <div class="phead"><span>NAVEGAÇAO</span><button aria-label="Recolher navegação"><svg><use href="#ll"/></svg></button></div>
            <a class="t first" href="#"><svg class="car"><use href="#car"/></svg><svg class="ti"><use href="#tdoc"/></svg>Dados do workflow</a>
            <a class="sub on" href="#">Formulário do processo de Atualização cadastral cooperativa 0914 Celeiro Cento Oeste</a>
            <a class="sub" href="#">Formulário de arquivo</a>
            <a class="t" href="#"><i></i><svg class="ti"><use href="#hist"/></svg>Histórico</a>
            <a class="t" href="#"><i></i><svg class="ti"><use href="#hsla"/></svg>Histórico SLA</a>
            <a class="t" href="#"><i></i><svg class="ti"><use href="#flux"/></svg>Fluxograma</a>
            <a class="t" href="#"><i></i><svg class="ti"><use href="#key"/></svg>Segurança</a>
          </nav>
          <div class="panel docp">
            <div class="phead"><span>DADOS DO WORKFLOW</span><svg class="cc"><use href="#cr"/></svg><span>FORMULARIO DO PROCESSO DE ATUALIZAÇAO CADASTRAL COOPERATIVA 0914 CELEIRO CENTO OESTE</span></div>
            <div class="meta">
              <svg class="pe"><use href="#person"/></svg>
              <div class="who"><b>INICIADOR</b><span>Maria Eduarda da Silva</span></div>
              <div class="sla"><b>DADOS DO SLA</b><i class="stop"></i><div class="prog"><span>31,52%</span></div></div>
              <div class="due"><b>PRAZO DESTE WORKFLOW</b><span><svg viewBox="0 0 22 22"><circle cx="11" cy="11" r="11" fill="#57a641"/><path fill="none" stroke="#fff" stroke-width="2.500" d="m6 13 5-5 5 5"/></svg>05/05/2021&nbsp; 16:35</span></div>
            </div>
            <div class="pane">
              <form>
                <p class="sm">Tec. de Serviços de T.I<br>Albino Andrade Dos Santos</p>
                <div class="brand"><div class="sic"><svg><use href="#pin"/></svg>Sicredi</div><h3>Processo de Atualização Cadastral Celeiro Centro Oeste</h3><div class="sic two"><svg><use href="#pin"/></svg>Sicredi</div></div>
                <div class="box r1">
                  <div class="fd"><label for="a1">Solicitante</label><input type="text" id="a1" value="Maria Eduarda da Silva" readonly></div>
                  <div class="fd"><label for="a2">Data Solicitação</label><div class="dt"><input type="text" id="a2" value="05/05/2021" readonly><button type="button" aria-label="Calendário"><svg><use href="#calen"/></svg></button><button type="button" aria-label="Limpar"><svg><use href="#broom"/></svg></button></div></div>
                  <div class="fd"><label for="a3">Agência</label><div class="sel"><select id="a3"><option>07 - Costa Rica</option></select><svg><use href="#cd"/></svg></div></div>
                </div>
                <fieldset class="seg"><legend>Segmento do Associado</legend>
                  <div class="segs"><div>PF Urbano<svg><use href="#urb"/></svg></div><div>PF Agro<svg><use href="#agro"/></svg></div><div>PJ<svg><use href="#pj"/></svg></div></div>
                </fieldset>
                <fieldset class="assoc"><legend>Dados do Associado</legend>
                  <div class="row r3">
                    <div class="fd"><label for="b1">Número da Conta</label><input type="text" id="b1" value="366862" readonly></div>
                    <button type="button" class="mg" aria-label="Buscar"><svg><use href="#mag"/></svg></button>
                    <div class="fd"><label for="b2">Segmento</label><input type="text" id="b2" value="PF Urbano" readonly></div>
                    <div class="fd"><label for="b3">CNPJ/CPF</label><input type="text" id="b3" value="52840506149" readonly></div>
                    <div class="fd"><label for="b4">Ultima Atualização Cadastral</label><input type="text" id="b4" value="03/03/2020" readonly></div>
                  </div>
                </fieldset>
                <fieldset class="addrf"><legend>Endereço de correspondencia</legend>
                  <div class="row r4">
                    <div class="fd"><label for="c1">Rua</label><input type="text" id="c1" value="PLANALTO" readonly></div>
                    <div class="fd"><label for="c2">Número</label><input type="text" id="c2" value="SN" readonly></div>
                    <div class="fd"><label for="c3">CEP</label><input type="text" id="c3" value="79.550-000" readonly></div>
                  </div>
                  <div class="row r5">
                    <div class="fd"><label for="d1">Município</label><input type="text" id="d1" value="COSTA RICA" readonly></div>
                    <div class="fd"><label for="d2">Bairro</label><input type="text" id="d2" value="ROD BR 359 KM 26 BAUS  CAIXA POST" readonly></div>
                    <div class="fd"><label for="d3">UF</label><input type="text" id="d3" value="MS" readonly></div>
                  </div>
                  <fieldset class="tel"><legend>Telefones e E-mail</legend>
                    <div class="row r6">
                      <div class="fd"><label for="e1">Residêncial</label><input type="text" id="e1" readonly></div>
                      <div class="fd"><label for="e2">Comercial</label><input type="text" id="e2" readonly></div>
                      <div class="fd"><label for="e3">Celular</label><input type="text" id="e3" value="(67) 99621-6759" readonly></div>
                    </div>
                    <div class="fd mail"><label for="e4">E-mail</label><input type="text" id="e4" readonly></div>
                  </fieldset>
                </fieldset>
              </form>
              <i class="vs"></i>
            </div>
            <i class="hs"></i>
          </div>
        </div>
      </div>
    </div>
    <footer class="task big">
      <button class="idle" aria-label="Iniciar"><svg class="w"><use href="#win"/></svg></button>
      <button aria-label="Chrome"><svg><use href="#chrome"/></svg></button>
      <button class="act" aria-label="Edge"><svg><use href="#edge"/></svg></button>
      <button aria-label="SeSuite"><svg><use href="#ss"/></svg></button>
      <button aria-label="Explorador"><svg><use href="#expl"/></svg></button>
      <button class="idle" aria-label="Outlook"><svg><use href="#outl"/></svg></button>
      <button aria-label="Bloco de notas"><svg><use href="#note"/></svg></button>
      <button aria-label="Calculadora"><svg><use href="#calc"/></svg></button>
      <button aria-label="Player"><svg><use href="#play"/></svg></button>
      <div class="tray"><time>11:35<br>06/05/2021</time></div>
    </footer>
  </section>
</main>
</body>
</html>
```
FILE: styles.css
```css
*{box-sizing:border-box}
body{margin:0;background:#1f2022}
svg{display:block;flex:none}
a{color:inherit;text-decoration:none}
p,h1,h2,h3{margin:0}
i{font-style:normal}
button{background:none;border:0;padding:0;margin:0;font:inherit;color:inherit;display:flex;align-items:center;justify-content:center}
select,input{font:inherit;color:inherit;margin:0}
.sprite{position:absolute;width:0;height:0}
.desk{display:grid;grid-template-columns:1fr 1fr;height:100vh;overflow:hidden}
.screen{display:flex;flex-direction:column;min-width:0;min-height:0}

/* browser chrome */
.tabs{display:flex;align-items:center;height:34px;background:#dee1e6;padding-left:9px;font:11px "Open Sans",sans-serif;color:#3c4043}
.tablist{display:flex;flex:0 0 1688px;height:34px}
.tab{flex:1;min-width:0;display:flex;align-items:center;gap:8px;padding:0 9px 0 11px;position:relative}
.tab.on{background:#fff;border-radius:8px 8px 0 0}
.tab.sep::before{content:"";position:absolute;left:0;top:7px;height:20px;width:1px;background:#808388}
.tab.last{border-right:1px solid #808388;height:20px;margin-top:7px}
.tab.last::before{top:0}
.tab span{flex:1;min-width:0;white-space:nowrap;mask-image:linear-gradient(90deg,#000 70%,#0003)}
.tab:first-child span{mask-image:none}
.tab .f{width:16px;height:16px}
.close{width:9px;height:9px}
.ui{flex:none;width:16px;height:16px;border:1px solid #1769e0;box-shadow:inset 0 0 0 1px #fff;background:#1769e0;color:#fff;font:bold 10px/14px "Liberation Sans",sans-serif;text-align:center}
.ui.dk{background:#1865a5;border-color:#1865a5;box-shadow:none}
.ui.or{background:#fa4616;border-color:#fa4616}
.newtab{width:44px}
.newtab svg{width:12px;height:12px}
.winbtns{margin-left:auto;display:flex;height:28px}
.winbtns button{width:46px;color:#111}
.winbtns svg{width:11px;height:11px}
.addr{display:flex;align-items:center;height:34px;background:#fff;padding:0 9px 0 5px;color:#5f6368}
.addr button{width:32px;height:28px}
.addr svg{width:14px;height:14px}
.addr .rl{width:20px;height:20px}
.addr .fwd{color:#bdbfc2}
.addr .omni{flex:1;min-width:0;display:flex;align-items:center;height:28px;border-radius:14px;background:#f1f3f4;margin:0 6px 0 7px;padding:0 0 0 12px}
.addr .omni button{width:30px}
.addr .lk{width:14px;height:14px}
.addr .st{width:18px;height:18px}
.url{flex:1;min-width:0;margin-left:6px;white-space:nowrap;font:14px Roboto,sans-serif}
.url b{font-weight:400;color:#202124}
.addr .ava{width:22px;height:22px;margin:0 5px}
.addr .dt{width:4px;height:14px}
.marks{display:grid;grid-template-columns:67px 73px 154px 150px 127px 154px 133px 134px 97px 154px 147px 135px 153px 1fr 56px;align-items:center;height:35px;background:#fff;border-bottom:1px solid #d5d7da;padding-left:14px;font:11px "Open Sans",sans-serif;color:#3c4043}
.marks a{display:flex;align-items:center;gap:8px;white-space:nowrap}
.marks svg{width:16px;height:16px}
.more{font-size:18px}

/* orchestrator */
.top{display:flex;align-items:center;height:65px;background:#1865a5;padding:0 20px 0 15px;font:20px Roboto,sans-serif;color:#fff}
.logo{width:220px;display:flex;align-items:center;gap:3px;font:bold 23px/33px Inter,sans-serif}
.logo i{width:34px;height:34px;border:3px solid #fff;line-height:28px;text-align:center}
.top .q{color:#6fa5cf}
.sepr{width:10px;height:16px;margin:0 7px 0 16px;color:#6fa5cf}
.top .cur{padding:0 5px;line-height:62px;border-bottom:3px solid #f2f4f6}
.fold{margin-left:auto;width:174px;height:44px;border:1px solid #fff;border-radius:4px;font-size:13px;line-height:14px;text-align:left}
.fold span{flex:1;margin-left:12px}
.fold b{display:block;font-weight:500}
.fold .fi{width:24px;height:24px;margin-left:15px}
.fold .c{width:13px;height:13px;margin-right:15px}
.ib{margin-left:18px}
.ib svg{width:24px;height:24px}
.ib.bell{position:relative;margin:0 13px 0 16px}
.ib.bell::after{content:"";position:absolute;width:12px;height:12px;border-radius:6px;background:#d32b2f;right:-2px;top:-2px}
.me{width:36px;height:36px;border-radius:18px;background:#ff6428;font-size:13px;font-weight:500}
.app{flex:1;min-height:0;display:grid;grid-template-columns:200px 1fr;background:#1f2022;color:#dcdedf;font-family:Roboto,sans-serif}
.side{padding-top:19px;font-weight:500}
.side a{display:flex;align-items:center;gap:18px;padding-left:18px}
.side a svg{width:24px;height:24px}
.side a .wide{width:28px;margin:0 -2px}
.grp{height:36px;background:#424242;border-radius:0 18px 18px 0;font-size:14px;position:relative}
.it + .grp{margin-top:22px}
.grp + .it{margin-top:16px}
.side .grp .c{position:absolute;left:164px;top:12px;width:12px;height:12px}
.it{height:40px;font-size:13px}
.blue{color:#2ba3ea}
.cut{stroke:#424242}
.lang{position:relative;display:flex;align-items:center;width:134px;height:40px;margin:34px 0 0 17px;padding-left:8px;background:#242527;border-radius:4px;box-shadow:0 2px 8px #0006;font-size:14px;font-weight:400}
.lang .lg{width:24px;height:26px}
.lang select{flex:1;appearance:none;background:none;border:0;padding:0 8px}
.car{width:10px;height:6px;color:#aaa}
.lang .car{margin-right:12px}
.ver{width:168px;margin-top:14px;text-align:center;font-size:12px;font-weight:400;line-height:15px}
.main{padding:20px 20px 0 30px;min-width:0}
.main h1{font-size:14px;font-weight:500;line-height:32px;padding-left:5px}
.filters{display:flex;align-items:center;gap:37px;height:30px;margin:15px 0 18px;padding-left:5px;font-size:13px;font-weight:500}
.filters svg{width:12px;height:12px;margin-left:8px}
.filters span{font-weight:400;margin-left:3px}
.find{display:flex;align-items:center;width:140px;height:30px;border-bottom:1px solid #5a5b5d;margin-right:-11px}
.find input{flex:1;min-width:0;padding:0;border:0;background:none;font-size:16px;font-weight:400}
.find input::placeholder{color:#9a9c9e;opacity:1}
.find svg{width:18px;height:18px;margin-right:4px}
.filters .reset{height:30px;margin-left:-15px;padding-left:26px;border-left:1px solid #3d3e40;color:#2ba3ea}
.card{position:relative;background:#242527;border-radius:4px;box-shadow:0 2px 5px #0004}
.fab{position:absolute;right:40px;top:-21px;width:40px;height:40px;border-radius:20px;background:#2ba7f0;box-shadow:0 3px 8px #0008}
.fab svg{width:16px;height:18px}
table{width:100%;table-layout:fixed;border-collapse:separate;border-spacing:0;font-size:13px;color:#a9abad}
.c0{width:55px}.c1{width:129px}.c2{width:143px}.c3{width:50px}
th,td{height:48px;padding:0;text-align:left;border-bottom:1px solid #404143;white-space:nowrap}
th{position:relative;height:56px;font-size:12px;font-weight:500;color:#dcdedf}
th.blue{color:#1f87d0}
th:not(.nog):not(:first-child)::before{content:"";position:absolute;left:-23px;top:20px;width:12px;height:18px;background:radial-gradient(circle,#3a3b3d 1px,transparent 2px) 0 0/6px 6px}
th:first-child,td:first-child{padding-left:17px}
.s,.selrow td{color:#dcdedf}
.s{font-weight:500}
.selrow td{font-size:14px}
.selrow td:first-child{padding-left:15px}
.inf{width:20px;height:20px;color:#dcdedf}
th button,td button{width:50px;color:#dcdedf}
.so{display:inline-block;width:8px;height:12px;margin-left:4px;vertical-align:-2px}
.rf{width:24px;height:24px}
.kb{width:6px;height:20px}
input[type=checkbox]{appearance:none;display:block;width:16px;height:16px;border:2px solid #dcdedf;border-radius:2px}
.pager{display:flex;align-items:center;justify-content:flex-end;height:55px;padding-right:5px;font-size:12px;color:#a9abad}
.pager button{width:40px;height:40px;color:#6c6e70}
.pager button svg{width:15px;height:15px}
.size{position:relative;display:flex;align-items:center;width:56px;height:24px;margin:0 36px 0 9px;border-bottom:1px solid #5a5b5d;color:#dcdedf;font-weight:500}
.size select{flex:1;min-width:0;appearance:none;border:0;background:none;padding:0}
.size .car{margin-right:4px}
.cnt{margin-right:32px}

/* taskbars */
.task{display:flex;height:40px;background:#2a3520;color:#fff;font:11px/18px "Open Sans",sans-serif}
.task button{width:49px;border-bottom:3px solid #76b9ed;background-clip:padding-box;padding-top:2px}
.task button{box-shadow:inset 4px 0 #2a3520,inset -5px 0 #2a3520}
.task button.act{background:#58644f;box-shadow:none;background-clip:border-box}
.task button.idle{border-color:transparent;box-shadow:none}
.task button svg{width:24px;height:24px}
.task button .w{width:16px;height:16px}
.tray{margin-left:auto;display:flex;align-items:center;gap:8px;padding-right:25px;text-align:center;line-height:18px;background:linear-gradient(#8a8f84,#8a8f84) right 4px top 0/1px 100% no-repeat}
.tray svg{width:16px;height:14px}
.tray span{text-align:left}
.tray .nt{width:16px;height:16px;margin-left:11px}
.task.big{height:60px;font:17px/28px "Open Sans",sans-serif;background:linear-gradient(90deg,#2a3520 0,#2a3520 19%,#3a3a3b 24%,#3c3d3f 50%,#3a3d38 53%,#27331f 57%,#27331f 90%,#3a2a20 94%,#25211f 100%)}
.task.big button{width:75px;box-shadow:none;border-bottom-width:0;position:relative}
.task.big button:not(.idle)::after{content:"";position:absolute;left:10px;right:5px;bottom:0;height:3px;background:#76b9ed}
.task.big .act{background:linear-gradient(#56624d,#56624d) 2px 0/73px 100% no-repeat}
.task.big .act::after{left:2px;right:0}
.task.big button svg{width:36px;height:36px}
.task.big button .w{width:24px;height:24px}
.task.big .tray{padding-right:11px;line-height:28px;background:none}

/* workflow window */
.back{flex:1;min-height:0;padding:0 11px 10px 10px;background:linear-gradient(#d0d0d0 0,#d6d6d6 47px,#f0f0f0 48px,#f0f0f0 105px,#d8d8d8 105px,#eee 106px)}
.edge{height:100%;display:flex;flex-direction:column;border:1px solid #666;border-top-color:#555;background:#fff;box-shadow:0 2px 9px #0007;font:15px "Liberation Sans",Arial,sans-serif;color:#555}
.etitle{display:flex;align-items:center;height:44px;background:#cdcdcd;padding:0 3px 0 2px;color:#111;font:17px "Open Sans",sans-serif}
.etitle span,.eurl span{flex:1}
.pg{width:18px;height:24px;margin-right:12px}
.etitle button{width:68px;height:44px}
.etitle button svg{width:16px;height:16px}
.eurl{display:flex;align-items:center;height:44px;padding:2px 14px 0 24px;font:22px "Open Sans",sans-serif;color:#777}
.eurl b{font-weight:400;color:#111}
.eurl .lk{width:20px;height:26px;margin-right:24px}
.eurl button svg{width:26px;height:26px}
.eurl button{margin-left:28px}
.eurl .lo{width:22px}
.ehead{display:flex;align-items:center;height:52px;border-top:3px solid #d4d4d4;padding:0 14px 0 10px;color:#8c8c8c;white-space:nowrap}
.hx{width:40px;height:44px;margin-right:11px}
.dw{font-size:18px;color:#555}
.ehead .cc{width:8px;height:12px;margin:0 16px 0 9px}
.ehead h2{font-size:23px;color:#555}
.bar{margin:0 18px}
.fl{width:22px;height:22px;margin-right:8px}
.ehead button:first-of-type{margin-left:auto}
.up{width:14px;height:18px}
.re{width:24px;height:22px;margin-left:27px}
.ribbon{display:flex;gap:3px;height:26px;color:#777}
.rcap{width:321px;background:#dfdfdf;text-align:center;line-height:26px}
.rfill{flex:1;background:#dfdfdf}
.tools{display:flex;align-items:flex-start;height:109px;padding:7px 0 0 9px;background:linear-gradient(#dedede,#dedede) 320px 0/1px 100% no-repeat #f4f4f4}
.tools button{flex-direction:column;justify-content:flex-start;line-height:16px;text-align:center;padding:0 1px;margin-right:17px}
.tools svg{width:44px;height:40px;margin-bottom:7px}
.tools .car{width:7px;height:5px;margin:8px 0 0;color:#111}
.work{flex:1;min-height:0;display:grid;grid-template-columns:301px 1fr;gap:16px;padding:14px 15px 13px 14px;background:#e6e6e6;border-bottom:3px solid #fff}
.panel{background:#fff;border:1px solid #dadada;border-radius:4px;min-height:0;min-width:0;display:flex;flex-direction:column}
.phead{position:relative;z-index:1;flex:none;display:flex;align-items:center;height:37px;padding:0 15px;background:#f5f5f5;border-bottom:1px solid #d9d9d9;border-radius:4px 4px 0 0;font:500 15px Roboto,sans-serif;color:#666}
.phead .cc{width:8px;height:12px;margin:0 9px 0 9px}
.phead button{margin-left:auto}
.phead button svg{width:18px;height:16px}
.navp{font-size:16px;color:#111}
.t{display:flex;align-items:center;height:54px}
.t.first{height:55px;padding-top:14px}
.t .ti{width:22px;height:22px;margin-right:2px}
.t .car{width:11px;height:8px;color:#111;margin:0 5px 0 18px}
.t i{width:4px;height:4px;background:#111;margin:0 10px 0 20px}
.sub{position:relative;padding:9px 24px 12px 64px;line-height:19px}
.sub::before{content:"";position:absolute;left:47px;top:16px;width:5px;height:5px;background:#888}
.sub.on{background:#efefef;border-left:6px solid #8e57a8;padding-left:58px;margin-bottom:1px}
.sub.on::before{left:41px}
.sub + .t{margin-top:6px}
.meta{display:grid;grid-template-columns:48px 614px 1fr auto;gap:14px;height:54px;flex:none;padding:4px 14px 0 12px;background:#efefef;border-bottom:1px solid #d9d9d9;color:#111}
.meta b{display:block;font-size:15px;line-height:16px;color:#666}
.meta .pe{width:48px;height:48px}
.who span{display:block;font-size:16px;line-height:28px}
.who b,.due b{padding-top:2px}
.due span{display:flex;align-items:center;gap:13px;font-size:16px;line-height:30px}
.due svg{width:22px;height:22px}
.sla{margin-top:-8px}
.stop{display:block;width:22px;height:22px;border:7px solid #f83a3a;border-radius:11px;background:#fff;margin-top:1px}
.prog{position:relative;width:135px;height:20px;margin:1px 0 0 32px;border-radius:10px;background:#dcdcdc;color:#57a641;line-height:20px}
.prog::before{content:"";position:absolute;left:0;top:0;width:42px;height:20px;border-radius:10px;background:#5aa544}
.prog span{padding-left:43px}
.pane{position:relative;flex:1;min-height:0;overflow:hidden;padding:32px 0 0 72px}
.docp form{width:844px;color:#333}
.sm{font-size:12px;line-height:18px;padding-left:2px}
.brand{display:flex;justify-content:space-between;height:56px;padding-left:5px;margin-bottom:12px}
.brand h3{align-self:center;font-size:19px;font-weight:400}
.sic{align-self:flex-end;display:flex;align-items:center;gap:2px;height:48px;color:#5fc832;font:italic bold 37px/46px "Open Sans",sans-serif}
.sic.two{align-self:flex-start}
.sic svg{width:46px;height:48px}
.box,fieldset{border:1px solid #aaa;margin:0;padding:0;min-width:0}
.box{display:grid;grid-template-columns:402px 197px 189px;gap:15px;width:842px;height:69px;padding:14px 14px 0;margin-bottom:6px}
.fd{display:flex;flex-direction:column;min-width:0}
.fd label{line-height:16px;color:#222;white-space:nowrap}
.fd input{width:100%;height:27px;border:1px solid #7b9ebd;border-radius:2px;background:#efefef;padding:0 2px 0 7px;font-size:17px;color:#222;white-space:pre}
.dt{display:flex;gap:1px}
.fd .dt input{width:148px}
.dt button{width:23px;height:27px;border:1px solid #dfe8f0;border-radius:2px}
.dt button svg{width:18px;height:18px}
.sel{position:relative}
.sel select{appearance:none;width:100%;height:27px;border:1px solid #a9c0d4;border-radius:2px;background:#f4f4f4;padding:0 6px;font-size:17px;color:#555}
.sel svg{position:absolute;right:9px;top:8px;width:12px;height:12px;color:#444}
legend{line-height:12px;padding:0 4px;margin-left:14px;color:#222}
.seg{height:91px}
.segs{display:flex;justify-content:space-between;padding:7px 38px 0 32px;font-size:14px;line-height:16px}
.segs div{width:106px;text-align:center}
.segs svg{width:106px;height:28px;margin-top:6px}
.assoc{height:84px}
.row{display:grid;padding-left:14px}
.assoc .row{padding-top:15px}
.r3{grid-template-columns:198px 86px 98px 178px 197px;gap:12px}
.mg{align-self:end}
.mg svg{width:60px;height:26px}
.addrf{margin-top:1px;width:842px;padding:12px 29px 0 8px}
.addrf > legend{margin-left:6px}
.addrf .row{padding-left:6px}
.r4{grid-template-columns:505px 57px 199px;gap:16px}
.r5{grid-template-columns:371px 335px 54px;gap:16px;margin:9px 0 3px}
.tel{padding-top:9px;height:160px}
.addrf .tel .row{padding-left:5px}
.r6{grid-template-columns:213px 270px 252px;gap:24px}
.mail{padding:5px 0 0 5px;width:500px}
.vs{position:absolute;right:5px;top:5px;width:8px;height:80px;border-radius:4px;background:#b9b9b9}
.hs{flex:none;display:block;width:82%;height:8px;margin:5px 0 12px 4px;border-radius:4px;background:#b9b9b9}
```
